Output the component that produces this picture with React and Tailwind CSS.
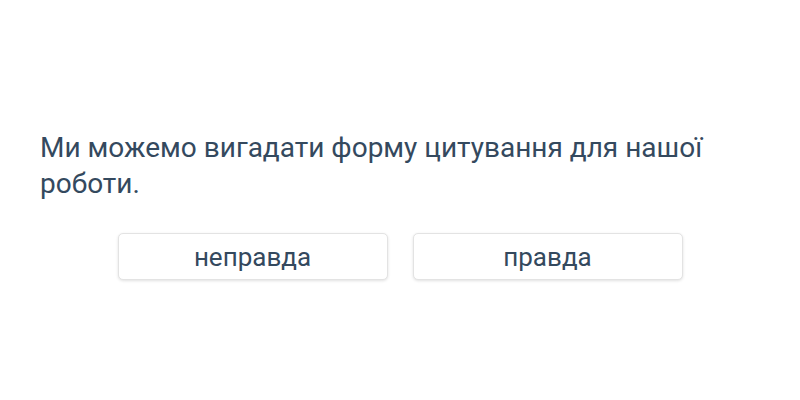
import React from 'react';

export default function App() {
  const options = ['неправда', 'правда'];

  return (
    <div className="w-[800px] h-[400px] bg-white flex flex-col pt-[130px] px-10 font-['Roboto',sans-serif]">
      {/* Question */}
      <p className="text-[28px] leading-[36px] text-[#34495e]">
        Ми можемо вигадати форму цитування для нашої роботи.
      </p>

      {/* Answers */}
      <div className="flex justify-center gap-[25px] mt-[31px]">
        {options.map((label) => (
          <button
            key={label}
            className="w-[270px] h-[47px] pt-[2px] bg-white border border-[#e3e3e3] rounded-[5px] shadow-[0_1px_3px_rgba(0,0,0,0.12)] text-[26px] text-[#34495e] flex items-center justify-center"
          >
            {label}
          </button>
        ))}
      </div>
    </div>
  );
}
